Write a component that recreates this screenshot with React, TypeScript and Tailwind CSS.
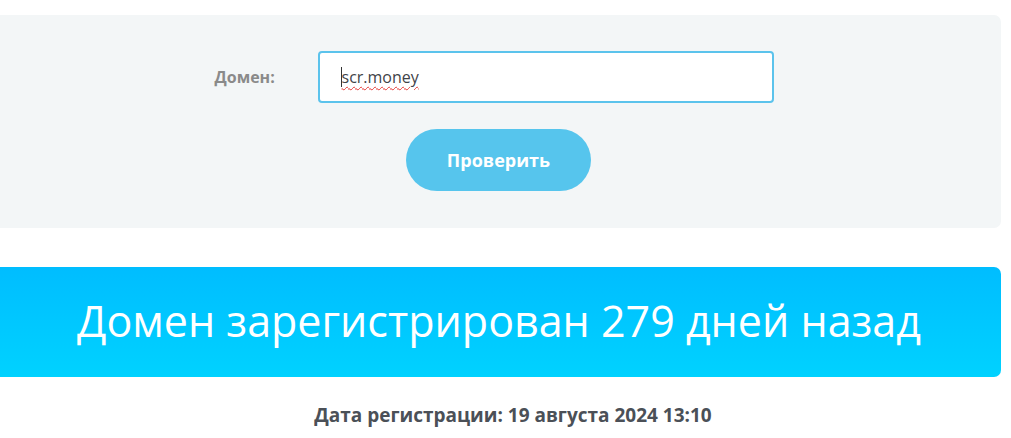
export default function App() {
  return (
    <div className="w-[1011px] h-[438px] bg-white overflow-hidden pt-[15px]" style={{ fontFamily: '"Open Sans", "Noto Sans", sans-serif' }}>
      <div className="w-[1001px] h-[213px] bg-[#f3f6f7] rounded-r-[7px] flex flex-col items-center pt-[36px]">
        <div className="flex items-center mr-[13px]">
          <div className="w-[103px] text-[16px] font-bold text-[#8a8a8a]">Домен:</div>
          <div className="w-[456px] h-[52px] bg-white border-2 border-[#5bc3ec] rounded-[4px] flex items-center pl-[21px]">
            <span className="text-[16px] text-[#3f4348] border-l border-[#333] leading-[20px] underline decoration-wavy decoration-[#e53935] decoration-1 underline-offset-[3px]">scr.money</span>
          </div>
        </div>
        <button className="mt-[26px] mr-[4px] w-[185px] h-[62px] rounded-full bg-[#56c5ed] text-white text-[18px] font-bold">Проверить</button>
      </div>
      <div className="mt-[39px] w-[1001px] h-[110px] rounded-r-[7px] bg-gradient-to-b from-[#00bdff] to-[#00d2ff] flex items-center justify-center pb-[2px]">
        <span className="text-white text-[43px] font-normal pr-[3px]">Домен зарегистрирован 279 дней назад</span>
      </div>
      <div className="mt-[24px] text-center text-[19px] font-bold text-[#4b5057] pl-[15px]">Дата регистрации: 19 августа 2024 13:10</div>
    </div>
  );
}
